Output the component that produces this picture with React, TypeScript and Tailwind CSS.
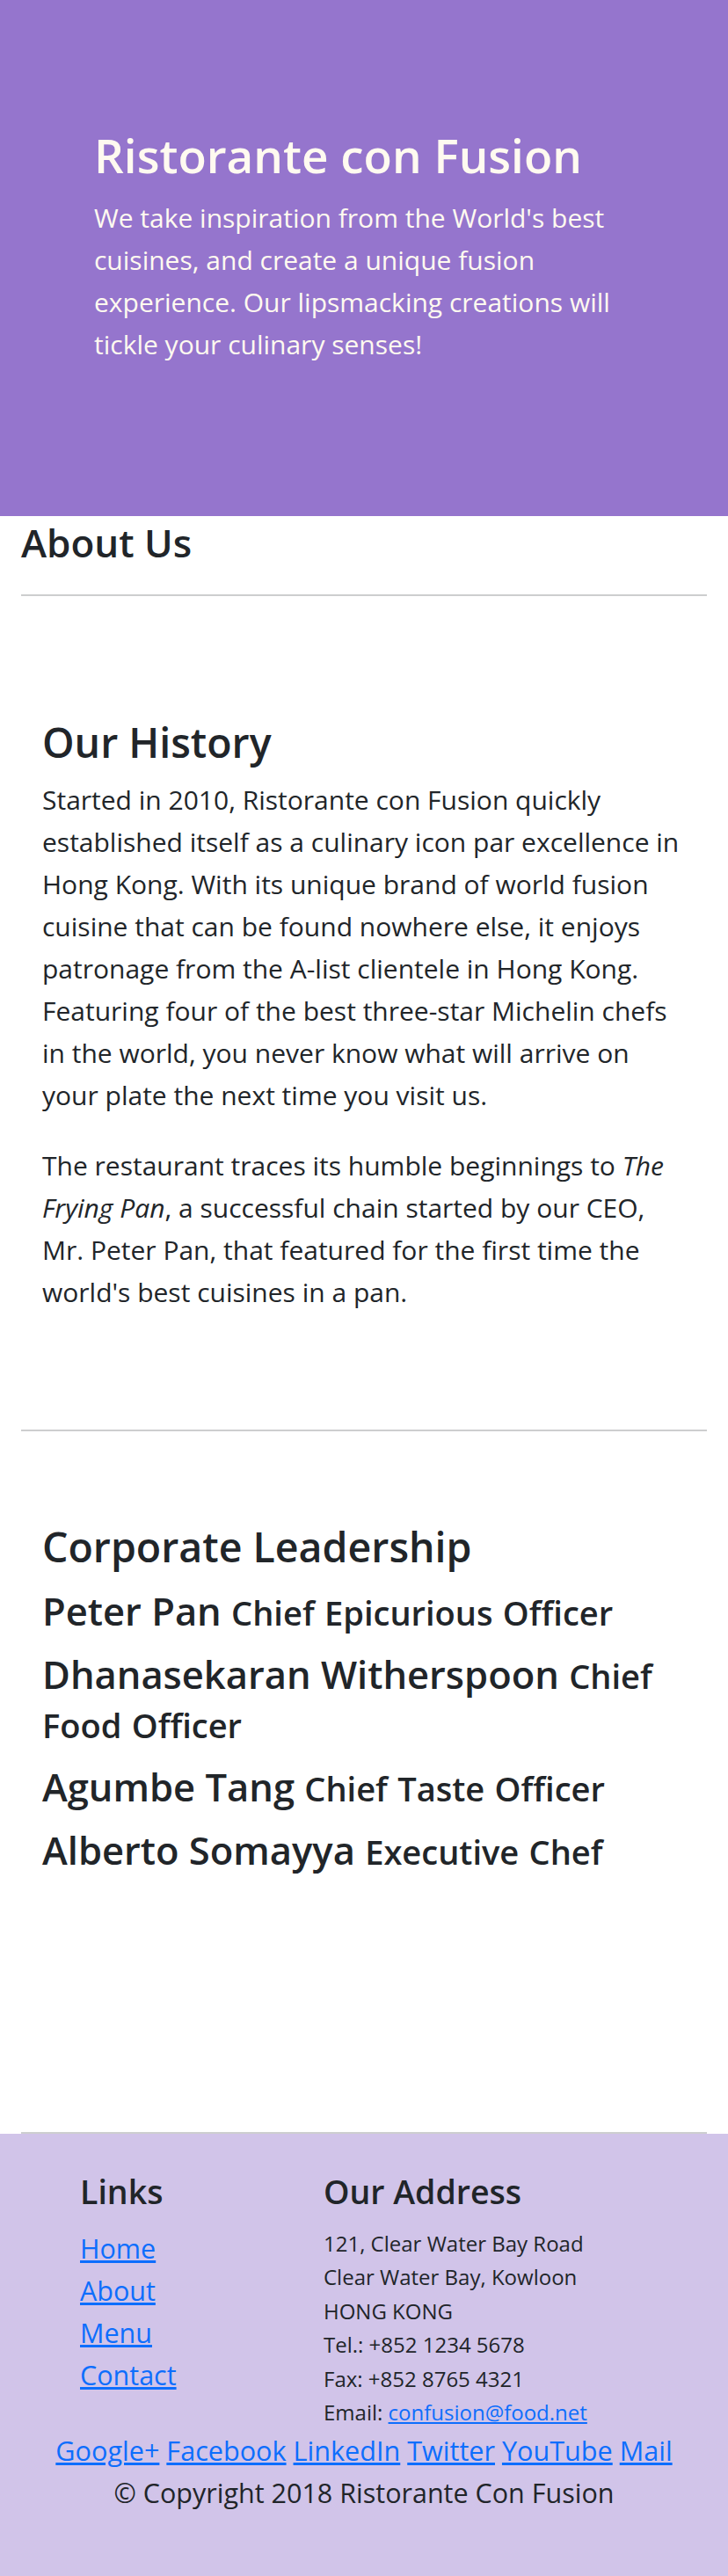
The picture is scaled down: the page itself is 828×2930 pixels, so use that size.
import React from "react";

const historyP1 = [
  "Started in 2010, Ristorante con Fusion quickly",
  "established itself as a culinary icon par excellence in",
  "Hong Kong. With its unique brand of world fusion",
  "cuisine that can be found nowhere else, it enjoys",
  "patronage from the A-list clientele in Hong Kong.",
  "Featuring four of the best three-star Michelin chefs",
  "in the world, you never know what will arrive on",
  "your plate the next time you visit us.",
];

const leaders = [
  { name: "Peter Pan", role: "Chief Epicurious Officer" },
  { name: "Dhanasekaran Witherspoon", role: "Chief Food Officer" },
  { name: "Agumbe Tang", role: "Chief Taste Officer" },
  { name: "Alberto Somayya", role: "Executive Chef" },
];

const socials = ["Google+", "Facebook", "LinkedIn", "Twitter", "YouTube", "Mail"];

export default function App() {
  return (
    <div className="w-full bg-white font-['Open_Sans',sans-serif] text-[#212529]">
      <header className="bg-[#9575cd] pt-[143px] pb-[171px] pl-[107px]">
        <div className="w-[613px] text-[#fffaf0]">
          <h1 className="mb-[14px] text-[53px] font-semibold leading-[67px]">
            Ristorante con Fusion
          </h1>
          <p className="text-[30px] leading-[48px]">
            We take inspiration from the World's best cuisines, and create a
            unique fusion experience. Our lipsmacking creations will tickle your
            culinary senses!
          </p>
        </div>
      </header>

      <main className="px-[24px]">
        <h2 className="text-[44px] font-semibold leading-[60px]">About Us</h2>
        <hr className="mt-[29px] h-[2px] border-0 bg-[#cdcecf]" />

        <section className="px-[24px] pt-[136px]">
          <h2 className="text-[46.5px] font-semibold leading-[60px]">Our History</h2>
          <p className="mt-[12px] whitespace-nowrap text-[30px] leading-[48px]">
            {historyP1.map((line, i) => (
              <React.Fragment key={i}>
                {line}
                {i < historyP1.length - 1 && <br />}
              </React.Fragment>
            ))}
          </p>
          <p className="mt-[32px] whitespace-nowrap text-[30px] leading-[48px]">
            The restaurant traces its humble beginnings to <em>The</em>
            <br />
            <em>Frying Pan</em>, a successful chain started by our CEO,
            <br />
            Mr. Peter Pan, that featured for the first time the
            <br />
            world's best cuisines in a pan.
          </p>
        </section>

        <hr className="mt-[132px] h-[2px] border-0 bg-[#cdcecf]" />

        <section className="px-[24px] pt-[101px]">
          <h2 className="mb-[16px] text-[46.5px] font-semibold leading-[60px]">
            Corporate Leadership
          </h2>
          <div className="flex flex-col gap-[16px]">
            {leaders.map((l) => (
              <h3 key={l.name} className="text-[43.5px] font-semibold leading-[56px]">
                {l.name}
                {l.role.split(" ").map((w, i) => (
                  <React.Fragment key={i}>
                    {" "}
                    <small className="text-[0.875em] leading-[48px]">{w}</small>
                  </React.Fragment>
                ))}
              </h3>
            ))}
          </div>
        </section>

        <hr className="mt-[292px] h-[2px] border-0 bg-[#cdcecf]" />
      </main>

      <footer className="bg-[#d1c4e9] pt-[42px] pb-[71px]">
        <div className="flex pl-[91px]">
          <div className="w-[277px]">
            <h5 className="mb-[16px] text-[37.5px] font-semibold leading-[48px]">Links</h5>
            <ul className="text-[30.5px] leading-[48px]">
              {["Home", "About", "Menu", "Contact"].map((t) => (
                <li key={t}>
                  <a href="#" className="text-[#0d6efd] underline">
                    {t}
                  </a>
                </li>
              ))}
            </ul>
          </div>
          <div className="flex-1">
            <h5 className="mb-[16px] text-[37.5px] font-semibold leading-[48px]">Our Address</h5>
            <address className="text-[24px] not-italic leading-[38.4px]">
              121, Clear Water Bay Road
              <br />
              Clear Water Bay, Kowloon
              <br />
              HONG KONG
              <br />
              Tel.: +852 1234 5678
              <br />
              Fax: +852 8765 4321
              <br />
              Email:{" "}
              <a href="#" className="text-[#0d6efd] underline">
                confusion@food.net
              </a>
            </address>
          </div>
        </div>
        <div className="text-center text-[30.6px] leading-[48px]">
          {socials.map((s, i) => (
            <React.Fragment key={s}>
              <a href="#" className="text-[#0d6efd] underline">
                {s}
              </a>
              {i < socials.length - 1 && " "}
            </React.Fragment>
          ))}
        </div>
        <p className="text-center text-[30.5px] leading-[48px]">© Copyright 2018 Ristorante Con Fusion</p>
      </footer>
    </div>
  );
}
